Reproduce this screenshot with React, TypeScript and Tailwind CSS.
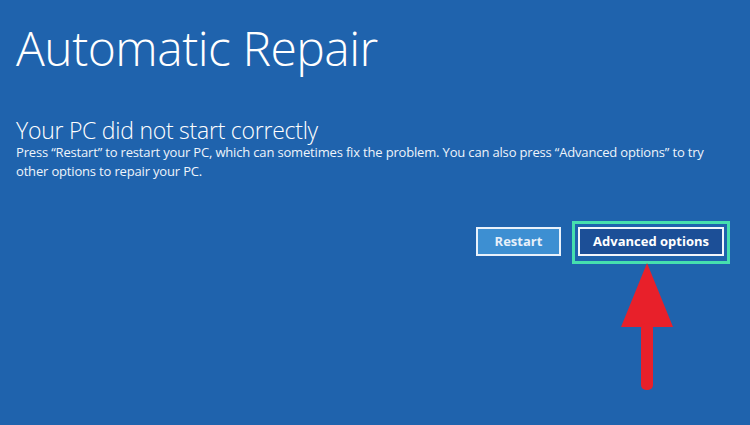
export default function App() {
  return (
    <div className="w-[750px] h-[425px] bg-[#1f63ad] text-white font-['Open_Sans',sans-serif] overflow-hidden">
      <div className="pl-[16px] pt-[18px]">
        <h1 className="text-[48px] font-light leading-[60px] tracking-[-0.5px]">Automatic Repair</h1>
        <h2 className="mt-[39px] text-[23px] font-light leading-[26px] tracking-[-0.25px]">Your PC did not start correctly</h2>
        <p className="text-[13px] leading-[19px] tracking-[-0.17px] text-[#eef4fb]">
          Press “Restart” to restart your PC, which can sometimes fix the problem. You can also press “Advanced options” to try
          <br />
          other options to repair your PC.
        </p>
      </div>
      <div className="flex justify-end items-start pr-[20px] mt-[40px]">
        <button className="mt-[6px] w-[85px] h-[29px] border-2 border-[#e8f1fb] bg-[#3d8fd2] text-[13px] font-bold text-[#e6f0fa]">
          Restart
        </button>
        <div className="ml-[11px] flex flex-col items-center">
          <div className="border-[3px] border-[#46dfae] p-[3px] pb-[5px]">
            <button className="w-[146px] h-[29px] border-2 border-[#f2f6fb] bg-[#1c4f97] text-[13px] font-bold text-white">
              Advanced options
            </button>
          </div>
          <svg width="60" height="128" viewBox="0 0 60 128" className="-mt-[1px]">
            <polygon points="26,0 52,64 0,64" fill="#e8202a" />
            <rect x="20" y="60" width="12" height="67" rx="5" fill="#e8202a" />
          </svg>
        </div>
      </div>
    </div>
  );
}
